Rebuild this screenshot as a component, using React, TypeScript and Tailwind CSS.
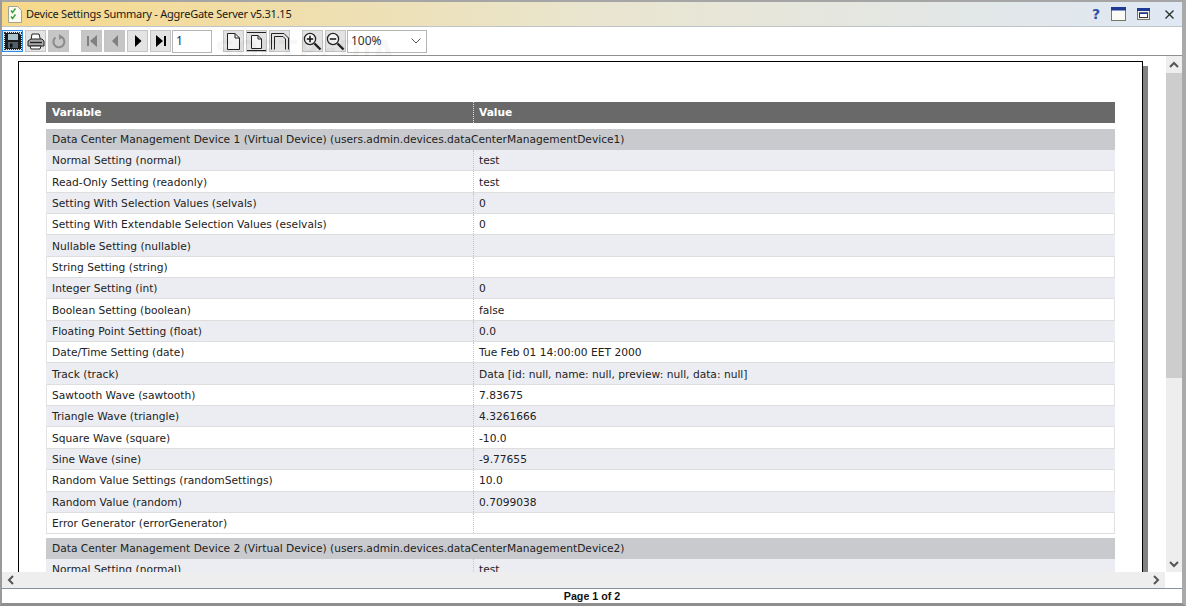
import React from "react";

const rows1: [string, string][] = [
  ["Normal Setting (normal)", "test"],
  ["Read-Only Setting (readonly)", "test"],
  ["Setting With Selection Values (selvals)", "0"],
  ["Setting With Extendable Selection Values (eselvals)", "0"],
  ["Nullable Setting (nullable)", ""],
  ["String Setting (string)", ""],
  ["Integer Setting (int)", "0"],
  ["Boolean Setting (boolean)", "false"],
  ["Floating Point Setting (float)", "0.0"],
  ["Date/Time Setting (date)", "Tue Feb 01 14:00:00 EET 2000"],
  ["Track (track)", "Data [id: null, name: null, preview: null, data: null]"],
  ["Sawtooth Wave (sawtooth)", "7.83675"],
  ["Triangle Wave (triangle)", "4.3261666"],
  ["Square Wave (square)", "-10.0"],
  ["Sine Wave (sine)", "-9.77655"],
  ["Random Value Settings (randomSettings)", "10.0"],
  ["Random Value (random)", "0.7099038"],
  ["Error Generator (errorGenerator)", ""],
];

function Row({ a, b, odd }: { a: string; b: string; odd: boolean }) {
  return (
    <div className={`flex h-[21.35px] shrink-0 items-center border-x border-b border-b-[#dedede] ${odd ? "border-x-[#ecedf2] bg-[#ecedf2]" : "border-x-[#e2e2e2] bg-white"}`}>
      <div className="flex h-full w-[426px] shrink-0 items-center pl-[5px] pt-[2px]">{a}</div>
      <div className="flex h-full flex-1 items-center border-l border-dotted border-[#c4c4c4] pl-[5px] pt-[2px]">{b}</div>
    </div>
  );
}

function Btn({ children, cls }: { children: React.ReactNode; cls: string }) {
  return <div className={`flex h-[22px] w-[21px] shrink-0 items-center justify-center border ${cls}`}>{children}</div>;
}

const on = "border-[#c4c4c4] bg-[#e3e3e3]";
const off = "border-[#c4c4c4] bg-[#c6c6c6]";

function PageIcon() {
  return (
    <svg width="13" height="17" viewBox="0 0 13 17" fill="none" stroke="#222" strokeWidth="1">
      <path d="M.5.5H8L12.5 5V16.5H.5Z" fill="#f4f4f4" />
      <path d="M8 .5V5H12.5" />
    </svg>
  );
}

function Lens({ plus }: { plus: boolean }) {
  return (
    <svg width="19" height="19" viewBox="0 0 19 19" fill="none">
      <circle cx="7" cy="7" r="5.6" fill="#f4f4f4" stroke="#222" strokeWidth="1.3" />
      <path d="M11.5 11.5 17.5 17.5" stroke="#222" strokeWidth="2.4" />
      <path d={plus ? "M3.8 7H10.2M7 3.8V10.2" : "M3.8 7H10.2"} stroke="#111" strokeWidth="1.5" />
    </svg>
  );
}

const Chevron = ({ d }: { d: string }) => (
  <svg width="10" height="10" viewBox="0 0 10 10" fill="none">
    <path d={d} stroke="#555" strokeWidth="2" />
  </svg>
);

export default function App() {
  return (
    <div className="relative flex h-[606px] w-[1186px] flex-col overflow-hidden border-b-[3px] border-l-[2px] border-r-[4px] border-t-[2px] border-b-[#8f8f8f] border-l-[#9a9a9a] border-r-[#a9a9a9] border-t-[#a5a5a5] bg-white [font-family:'DejaVu_Sans',sans-serif] text-[10.67px] text-[#222]">
      {/* title bar */}
      <div className="flex h-[25px] shrink-0 items-center border-b border-[#bfc4c9] bg-gradient-to-r from-[#f6d888] via-[#e9e5cf] to-[#dfe8f4] pl-[6px] pr-[8px]">
        <svg width="14" height="17" viewBox="0 0 14 17" fill="none">
          <path d="M.5.5H9.500L13.500 4.500V16.500H.5Z" fill="#fbfbf4" stroke="#a3a38f" />
          <path d="M3 4.500 4.500 6.500 7.500 2.500M3 10.500 4.500 12.500 7.500 8.500" stroke="#3aa03a" strokeWidth="1.4" />
        </svg>
        <span className="ml-[4px] whitespace-nowrap [font-family:'Noto_Sans',sans-serif] text-[11px] tracking-[-0.24px] text-[#1a1a1a]">Device Settings Summary - AggreGate Server v5.31.15</span>
        <div className="flex-1" />
        <span className="mr-[11px] text-[14px] font-bold leading-none text-[#2e4fa6]">?</span>
        <svg width="15" height="14" viewBox="0 0 15 14" className="mr-[11px]">
          <rect x=".5" y=".5" width="14" height="13" fill="#fbfbf6" stroke="#77756a" />
          <rect x="0" y="0" width="15" height="3.500" fill="#1f3a94" />
        </svg>
        <svg width="13" height="12" viewBox="0 0 13 12" className="mr-[15px]">
          <rect x=".5" y=".5" width="12" height="11" fill="#f2f0e4" stroke="#77756a" />
          <rect x="0" y="0" width="13" height="3" fill="#1f3a94" />
          <rect x="2.500" y="5" width="8" height="4.500" fill="#fff" stroke="#333" />
          <rect x="2" y="4.500" width="9" height="1.500" fill="#1f3a94" />
        </svg>
        <svg width="9" height="9" viewBox="0 0 9 9">
          <path d="M.5.5 8.500 8.500M8.500.5.5 8.500" stroke="#22332a" strokeWidth="1.3" />
        </svg>
      </div>

      {/* toolbar */}
      <div className="relative flex h-[29px] shrink-0 items-center border-b border-[#8f8f8f] bg-white">
        <Btn cls="border-[#2f8be0] bg-[#dfeaf5]">
          <div className="flex h-[18px] w-[18px] items-center justify-center border border-dotted border-[#333]">
            <svg width="16" height="16" viewBox="0 0 16 16">
              <path d="M0 0H14L16 2V16H0Z" fill="#1b1b1b" />
              <rect x="3" y="1" width="10" height="6" fill="#a9c3cc" />
              <rect x="3" y="9" width="10" height="6" fill="#52606b" />
              <rect x="5" y="10.500" width="2.500" height="4" fill="#111" />
            </svg>
          </div>
        </Btn>
        <div className="ml-[2px]">
          <Btn cls={on}>
            <svg width="18" height="17" viewBox="0 0 18 17">
              <path d="M5 1H12L13.500 7H4Z" fill="#fff" stroke="#222" />
              <path d="M1 8 4 6H15L17 8V13H1Z" fill="#aaa" stroke="#222" />
              <path d="M3 13H14L13 16H4Z" fill="#fff" stroke="#222" />
              <path d="M3 9.500H15" stroke="#222" strokeWidth="1.4" />
            </svg>
          </Btn>
        </div>
        <div className="ml-[2px]">
          <Btn cls={off}>
            <svg width="15" height="15" viewBox="0 0 15 15" fill="none">
              <path d="M4.500 3.500A5.500 5.500 0 1 0 10.500 3" stroke="#8b8b8b" strokeWidth="2" />
              <path d="M8 0V6L12 3Z" fill="#8b8b8b" />
            </svg>
          </Btn>
        </div>
        <div className="ml-[12px]">
          <Btn cls={off}>
            <svg width="12" height="12" viewBox="0 0 12 12"><path d="M1 1H3V11H1ZM11 0V12L4 6Z" fill="#808080" /></svg>
          </Btn>
        </div>
        <div className="ml-[2px]">
          <Btn cls={off}>
            <svg width="12" height="12" viewBox="0 0 12 12"><path d="M9 0V12L3 6Z" fill="#808080" /></svg>
          </Btn>
        </div>
        <div className="ml-[2px]">
          <Btn cls={on}>
            <svg width="12" height="12" viewBox="0 0 12 12"><path d="M3 0V12L9.500 6Z" fill="#000" /></svg>
          </Btn>
        </div>
        <div className="ml-[2px]">
          <Btn cls={on}>
            <svg width="12" height="12" viewBox="0 0 12 12"><path d="M1 0V12L8 6ZM9 1H11V11H9Z" fill="#000" /></svg>
          </Btn>
        </div>
        <div className="ml-[1px] flex h-[23px] w-[40px] items-center border border-[#b5b5b5] pl-[3px] [font-family:'Noto_Sans',sans-serif] text-[12px] text-[#1a2a6a]">1</div>
        <div className="ml-[11px]">
          <Btn cls={on}><PageIcon /></Btn>
        </div>
        <div className="ml-[2px]">
          <Btn cls={on}>
            <div className="flex h-[19px] w-[21px] justify-center border-y border-[#222] pt-[2px]">
              <svg width="11" height="14" viewBox="0 0 11 14" fill="none" stroke="#222">
                <path d="M.5.5H7L10.500 4V13.500H.5Z" fill="#f4f4f4" /><path d="M7 .5V4H10.500" />
              </svg>
            </div>
          </Btn>
        </div>
        <div className="ml-[2px]">
          <Btn cls={on}>
            <svg width="18" height="17" viewBox="0 0 18 17" fill="none" stroke="#222">
              <path d="M.5 16.500V.5H13L17.500 5V16.500" />
              <path d="M3.500 16.500V3.500H12L14.500 6V16.500" />
            </svg>
          </Btn>
        </div>
        <div className="ml-[12px]">
          <Btn cls={on}><Lens plus /></Btn>
        </div>
        <div className="ml-[2px]">
          <Btn cls={on}><Lens plus={false} /></Btn>
        </div>
        <div className="ml-[1px] flex h-[23px] w-[80px] items-center justify-between border border-[#b5b5b5] pl-[3px] pr-[5px] [font-family:'Noto_Sans',sans-serif] text-[12px] text-[#333]">
          <span>100%</span>
          <svg width="10" height="6" viewBox="0 0 10 6" fill="none"><path d="M.5.5 5 5 9.500.5" stroke="#555" /></svg>
        </div>
        <span className="pointer-events-none absolute left-[213px] top-[4px] select-none text-[27px] font-bold tracking-[1px] text-[#000]/[0.05]">SOFTPEDIA</span>
      </div>

      {/* body */}
      <div className="flex min-h-0 flex-1">
        <div className="relative min-w-0 flex-1 overflow-hidden bg-white">
          {/* page */}
          <div className="ml-[16px] mt-[5px] h-[600px] w-[1125px] border border-black pl-[27px] pr-[27px] pt-[40px] shadow-[5px_5px_0_0_#828282]">
            <div className="flex h-[21px] items-center bg-[#696969] font-bold text-white">
              <div className="w-[427px] shrink-0 pl-[6px] pt-[1px]">Variable</div>
              <div className="flex h-full flex-1 items-center border-l border-dotted border-[#ddd] pl-[5px] pt-[1px]">Value</div>
            </div>
            <div className="mt-[6px] flex h-[21px] items-center bg-[#c9cace] pl-[6px] pt-[1px]">Data Center Management Device 1 (Virtual Device) (users.admin.devices.dataCenterManagementDevice1)</div>
            {rows1.map((r, i) => (
              <Row key={r[0]} a={r[0]} b={r[1]} odd={i % 2 === 0} />
            ))}
            <div className="mt-[4px] flex h-[21px] items-center bg-[#c9cace] pl-[6px] pt-[1px]">Data Center Management Device 2 (Virtual Device) (users.admin.devices.dataCenterManagementDevice2)</div>
            <Row a="Normal Setting (normal)" b="test" odd />
          </div>
        </div>
        {/* vertical scrollbar */}
        <div className="flex w-[16px] shrink-0 flex-col bg-[#eeeeee]">
          <div className="flex h-[17px] items-center justify-center"><Chevron d="M1 7 5 3 9 7" /></div>
          <div className="h-[305px] bg-[#cdcdcd]" />
          <div className="flex-1" />
          <div className="flex h-[17px] items-center justify-center"><Chevron d="M1 3 5 7 9 3" /></div>
        </div>
      </div>

      {/* horizontal scrollbar */}
      <div className="flex h-[16px] shrink-0 bg-white">
        <div className="flex flex-1 items-center justify-between bg-[#eeeeee] px-[4px]">
          <Chevron d="M7 1 3 5 7 9" />
          <Chevron d="M3 1 7 5 3 9" />
        </div>
        <div className="w-[17px] shrink-0" />
      </div>

      {/* status */}
      <div className="flex h-[15px] shrink-0 items-center justify-center border-t border-[#8a9299] bg-white [font-family:'Liberation_Sans',sans-serif] text-[10.7px] font-bold text-[#111]">Page 1 of 2</div>
    </div>
  );
}
